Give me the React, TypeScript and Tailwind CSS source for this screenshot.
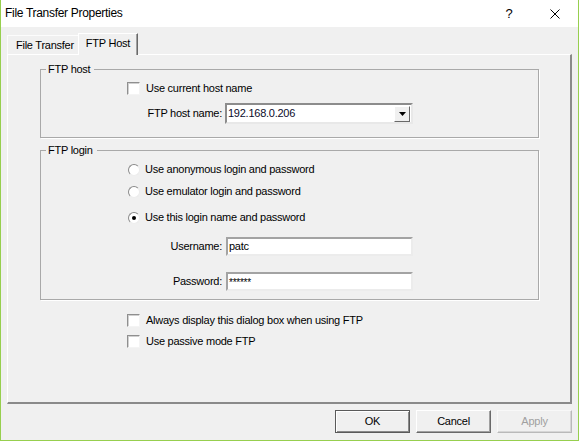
import React from "react";

const font = "font-['Liberation_Sans',Arial,sans-serif]";

function CheckBox({ label }: { label: string }) {
  return (
    <div className="flex items-center gap-[6px] h-[13px]">
      <span className="w-[13px] h-[13px] bg-white border border-t-[#8f8f8f] border-l-[#8f8f8f] border-r-[#f4f4f4] border-b-[#f4f4f4] shadow-[inset_1px_1px_0_#d0d0d0]" />
      <span>{label}</span>
    </div>
  );
}

function Radio({ label, checked }: { label: string; checked?: boolean }) {
  return (
    <div className="flex items-center gap-[5px] h-[13px]">
      <span className="w-[12px] h-[12px] rounded-full bg-white border border-t-[#8a8a8a] border-l-[#8a8a8a] border-r-[#ececec] border-b-[#ececec] flex items-center justify-center">
        {checked && <span className="w-[4px] h-[4px] rounded-full bg-black" />}
      </span>
      <span>{label}</span>
    </div>
  );
}

function LabeledField({ label, value, small }: { label: string; value: string; small?: boolean }) {
  return (
    <div className="flex items-center">
      <span className="w-[185px] text-right pr-[4px]">{label}</span>
      <div className="w-[187px] h-[19px] bg-white border-2 border-t-[#a3a3a3] border-l-[#a3a3a3] border-r-[#ececec] border-b-[#ececec] flex items-center pl-[1px]">
        <span className={small ? "text-[10px] leading-[10px] pt-[2px]" : ""}>{value}</span>
      </div>
    </div>
  );
}

function Button({ label, primary, disabled }: { label: string; primary?: boolean; disabled?: boolean }) {
  return (
    <button
      type="button"
      className={`w-[75px] h-[23px] bg-[#f0f0f0] border ${
        primary
          ? "border-[#5a5a5a] shadow-[inset_1px_1px_0_#ffffff,inset_-1px_-1px_0_#8a8a8a]"
          : disabled
          ? "border-t-[#f8f8f8] border-l-[#f8f8f8] border-r-[#b9b9b9] border-b-[#b9b9b9] shadow-[inset_-1px_-1px_0_#d6d6d6]"
          : "border-t-white border-l-white border-r-[#696969] border-b-[#696969] shadow-[inset_-1px_-1px_0_#a0a0a0]"
      } ${disabled ? "text-[#a0a0a0]" : "text-black"}`}
    >
      {label}
    </button>
  );
}

export default function App() {
  return (
    <div
      className={`${font} w-[579px] h-[441px] bg-[#f0f0f0] border-l border-r border-b border-[#97cf4e] flex flex-col text-[11px] leading-[13px] tracking-[-0.25px] text-black`}
    >
      {/* title bar */}
      <div className="h-[27px] bg-white flex items-center shrink-0">
        <span className="pl-[4px] text-[12px] tracking-[-0.3px] flex-1">File Transfer Properties</span>
        <span className="w-[46px] text-center text-[13px] pb-[1px]">?</span>
        <span className="w-[46px] flex justify-center">
          <svg width="10" height="10" viewBox="0 0 10 10">
            <path d="M0.5 0.5 L9.5 9.5 M9.5 0.5 L0.5 9.5" stroke="#000" strokeWidth="1" />
          </svg>
        </span>
      </div>

      <div className="flex-1 flex flex-col px-[6px] pb-[7px]">
        {/* tabs */}
        <div className="h-[27px] flex items-end shrink-0">
          <div className="w-[71px] h-[19px] border-t border-l border-[#fcfcfc] flex items-center pl-[8px]">
            File Transfer
          </div>
          <div className="w-[60px] h-[22px] -mb-[1px] bg-[#f0f0f0] border-t border-l border-white border-r border-r-[#696969] shadow-[inset_-1px_0_0_#a0a0a0] flex items-center justify-center pb-[2px] z-10">
            FTP Host
          </div>
        </div>

        {/* panel */}
        <div className="h-[350px] border-t border-l border-white border-r-2 border-b-2 border-r-[#8a8a8a] border-b-[#8a8a8a] flex flex-col shrink-0">
          <fieldset className="ml-[32px] mt-[8px] w-[499px] h-[75px] border border-[#a9a9a9] shadow-[1px_1px_0_#fff] min-w-0 p-0">
            <legend className="ml-[5px] pl-[2px] pr-[4px] leading-[13px]">FTP host</legend>
            <div className="pl-[86px] pt-[6px]">
              <CheckBox label="Use current host name" />
            </div>
            <div className="flex items-center mt-[8px]">
              <span className="w-[184px] text-right pr-[3px]">FTP host name:</span>
              <div className="w-[188px] h-[21px] bg-white border-2 border-t-[#8c8c8c] border-l-[#8c8c8c] border-r-[#e8e8e8] border-b-[#e8e8e8] flex items-center">
                <span className="flex-1 pl-[1px] text-[#0b0b2a]">192.168.0.206</span>
                <span className="w-[16px] h-[16px] bg-[#f0f0f0] border border-t-white border-l-white border-r-[#696969] border-b-[#696969] flex items-center justify-center mr-[1px]">
                  <svg width="7" height="4" viewBox="0 0 7 4">
                    <path d="M0 0 H7 L3.5 4 Z" fill="#000" />
                  </svg>
                </span>
              </div>
            </div>
          </fieldset>

          <fieldset className="ml-[32px] mt-[6px] w-[499px] h-[156px] border border-[#a9a9a9] shadow-[1px_1px_0_#fff] min-w-0 p-0">
            <legend className="ml-[5px] pl-[2px] pr-[4px] leading-[13px]">FTP login</legend>
            <div className="pl-[87px] pt-[6px] flex flex-col">
              <Radio label="Use anonymous login and password" />
              <div className="mt-[9px]">
                <Radio label="Use emulator login and password" />
              </div>
              <div className="mt-[13px]">
                <Radio label="Use this login name and password" checked />
              </div>
            </div>
            <div className="mt-[13px]">
              <LabeledField label="Username:" value="patc" />
            </div>
            <div className="mt-[16px]">
              <LabeledField label="Password:" value="******" small />
            </div>
          </fieldset>

          <div className="pl-[119px] mt-[14px] flex flex-col gap-[8px]">
            <CheckBox label="Always display this dialog box when using FTP" />
            <CheckBox label="Use passive mode FTP" />
          </div>
        </div>

        {/* buttons */}
        <div className="mt-[6px] flex justify-end gap-[6px]">
          <Button label="OK" primary />
          <Button label="Cancel" />
          <Button label="Apply" disabled />
        </div>
      </div>
    </div>
  );
}
